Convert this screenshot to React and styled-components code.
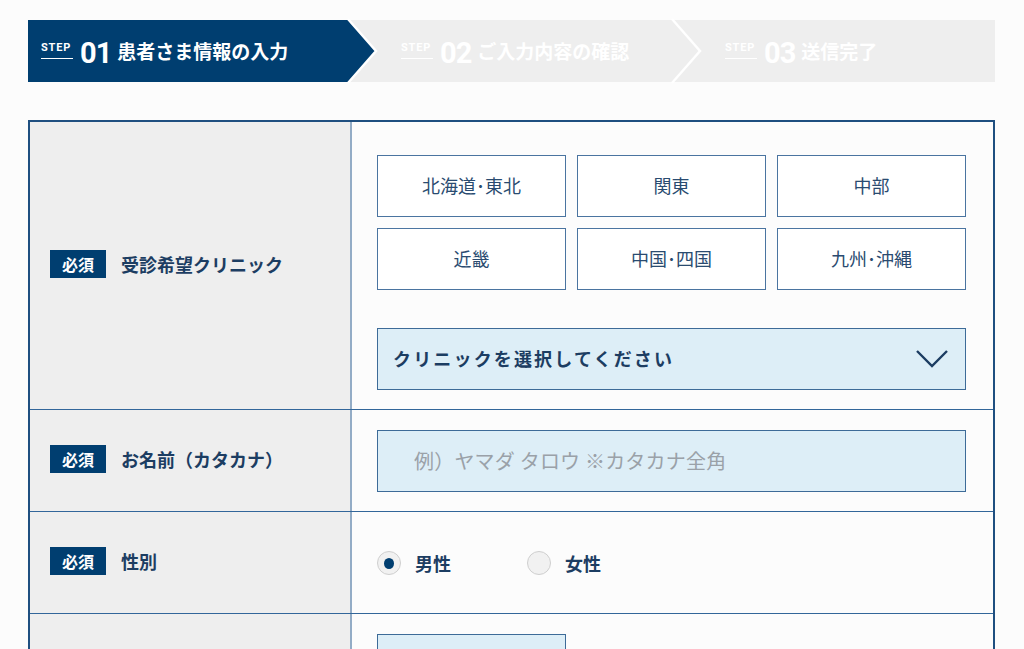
import styled, { createGlobalStyle } from 'styled-components';

const NAVY = '#003e70';
const INK = '#1c3d62';

const GlobalStyle = createGlobalStyle`
  body {
    margin: 0;
    background: #fcfcfc;
    font-family: "Noto Sans CJK JP", "Noto Sans", sans-serif;
    color: ${INK};
  }
  * { box-sizing: border-box; }
`;

const STEPS = [
  { no: '01', title: '患者さま情報の入力', active: true, width: '320px' },
  { no: '02', title: 'ご入力内容の確認', width: '324px' },
  { no: '03', title: '送信完了' },
];

const REGIONS = ['北海道･東北', '関東', '中部', '近畿', '中国･四国', '九州･沖縄'];

// chevron between two steps, filled when the step before it is the current one
const StepArrow = ({ filled }) => (
  <ArrowSvg width="30" height="62" viewBox="0 0 30 62">
    {filled && <polygon points="0,0 28,31 0,62" fill={NAVY} />}
    <polyline points="0,-1 28,31 0,63" fill="none" stroke="#fff" strokeWidth="2.5" />
  </ArrowSvg>
);

const ChevronDown = () => (
  <svg width="34" height="20" viewBox="0 0 34 20">
    <polyline points="2,2 17,17 32,2" fill="none" stroke={INK} strokeWidth="2.4" />
  </svg>
);

const Required = () => <Badge>必須</Badge>;

const App = () => {
  return (
    <Page>
      <GlobalStyle />
      <StepBar>
        {STEPS.map((s, i) => (
          <StepGroup key={s.no} $width={s.width}>
            <Step $active={s.active} $first={i === 0}>
              <StepLabel>STEP</StepLabel>
              <StepNo>{s.no}</StepNo>
              <StepTitle>{s.title}</StepTitle>
            </Step>
            {i < STEPS.length - 1 && <StepArrow filled={s.active} />}
          </StepGroup>
        ))}
      </StepBar>

      <FormTable>
        <Row>
          <Head>
            <Required />
            <HeadText>受診希望クリニック</HeadText>
          </Head>
          <Cell $top={33} $bottom={19}>
            <RegionGrid>
              {REGIONS.map(r => (
                <RegionButton key={r}>{r}</RegionButton>
              ))}
            </RegionGrid>
            <Select>
              <span>クリニックを選択してください</span>
              <ChevronDown />
            </Select>
          </Cell>
        </Row>

        <Row>
          <Head>
            <Required />
            <HeadText>お名前（カタカナ）</HeadText>
          </Head>
          <Cell $top={20} $bottom={19}>
            <TextInput placeholder="例）ヤマダ タロウ ※カタカナ全角" />
          </Cell>
        </Row>

        <Row>
          <Head>
            <Required />
            <HeadText>性別</HeadText>
          </Head>
          <Cell $top={20} $bottom={19}>
            <RadioGroup>
              <RadioItem>
                <RadioDot $checked />
                男性
              </RadioItem>
              <RadioItem>
                <RadioDot />
                女性
              </RadioItem>
            </RadioGroup>
          </Cell>
        </Row>

        <Row>
          <Head>
            <Required />
            <HeadText>生年月日</HeadText>
          </Head>
          <Cell $top={20} $bottom={19}>
            <TextInput $short />
          </Cell>
        </Row>
      </FormTable>
    </Page>
  );
};

const Page = styled.div`
  padding: 20px 29px 40px 28px;
`;

const StepBar = styled.div`
  display: flex;
  height: 62px;
  background: #eeeeee;
`;

const StepGroup = styled.div`
  display: flex;
  flex: ${p => (p.$width ? 'none' : '1')};
  width: ${p => p.$width || 'auto'};
`;

const Step = styled.div`
  flex: 1;
  display: flex;
  align-items: center;
  padding-left: ${p => (p.$first ? '13px' : '53px')};
  padding-bottom: 2px;
  background: ${p => (p.$active ? NAVY : 'transparent')};
  color: #fff;
`;

const ArrowSvg = styled.svg`
  flex: none;
  display: block;
  overflow: visible;
  margin-right: -30px;
  position: relative;
  z-index: 1;
`;

const StepLabel = styled.span`
  font-family: Roboto, "Liberation Sans", sans-serif;
  font-weight: 700;
  font-size: 11px;
  letter-spacing: 0.8px;
  padding: 0 2px 5px 0;
  border-bottom: 1px solid #fff;
  margin-top: 1px;
  line-height: 11px;
`;

const StepNo = styled.span`
  font-family: Roboto, "Liberation Sans", sans-serif;
  font-weight: 700;
  font-size: 29px;
  letter-spacing: -1px;
  line-height: 1;
  margin: 6px 0 0 7px;
`;

const StepTitle = styled.span`
  font-weight: 700;
  font-size: 19px;
  margin-left: 6px;
`;

const FormTable = styled.div`
  margin-top: 38px;
  border: 2px solid #1f4f80;
  border-bottom: none;
  background: #fcfcfc;
`;

const Row = styled.div`
  display: grid;
  grid-template-columns: 322px 1fr;
  border-bottom: 1px solid #32669a;
`;

const Head = styled.div`
  display: flex;
  align-items: center;
  padding: 0 0 3px 20px;
  background: #eeeeee;
  border-right: 2px solid #93acc6;
`;

const Badge = styled.span`
  display: inline-flex;
  align-items: center;
  justify-content: center;
  width: 56px;
  height: 28px;
  padding-bottom: 1px;
  background: ${NAVY};
  color: #fff;
  font-size: 16px;
  font-weight: 700;
`;

const HeadText = styled.span`
  margin: 0 0 1px 15px;
  font-size: 18px;
  font-weight: 700;
  color: ${INK};
`;

const Cell = styled.div`
  padding: ${p => p.$top}px 27px ${p => p.$bottom}px 25px;
`;

const RegionGrid = styled.div`
  display: grid;
  grid-template-columns: repeat(3, 1fr);
  gap: 11px;
`;

const RegionButton = styled.button`
  height: 62px;
  padding: 0 0 3px;
  background: #fff;
  border: 1px solid #4a74a0;
  border-radius: 0;
  font-family: inherit;
  font-size: 18px;
  color: #2a4b70;
  cursor: pointer;
`;

const Select = styled.div`
  display: flex;
  align-items: center;
  justify-content: space-between;
  height: 62px;
  margin-top: 38px;
  padding: 0 16px 3px 15px;
  background: #ddeef7;
  border: 1px solid #3d6b98;
  font-size: 18px;
  font-weight: 700;
  letter-spacing: 0.12em;
  color: ${INK};

  svg {
    margin-top: 3px;
  }
`;

const TextInput = styled.input`
  display: block;
  width: ${p => (p.$short ? '189px' : '100%')};
  height: 62px;
  padding: 0 0 2px 36px;
  background: #ddeef7;
  border: 1px solid #3d6b98;
  border-radius: 0;
  font-family: inherit;
  font-size: 20px;
  letter-spacing: 0.2px;
  color: ${INK};
  outline: none;
  &::placeholder {
    color: #9aa1a8;
  }
`;

const RadioGroup = styled.div`
  display: flex;
  align-items: center;
  height: 62px;
  gap: 76px;
`;

const RadioItem = styled.label`
  display: flex;
  align-items: center;
  gap: 14px;
  font-size: 18px;
  font-weight: 700;
  color: ${INK};
  cursor: pointer;
`;

const RadioDot = styled.span`
  width: 24px;
  height: 24px;
  border-radius: 50%;
  background: #f1f1f1;
  border: 1px solid #cfcfcf;
  display: flex;
  align-items: center;
  justify-content: center;
  &::after {
    content: '';
    width: 10px;
    height: 11px;
    border-radius: 50%;
    background: ${NAVY};
    display: ${p => (p.$checked ? 'block' : 'none')};
  }
`;

export default App;
